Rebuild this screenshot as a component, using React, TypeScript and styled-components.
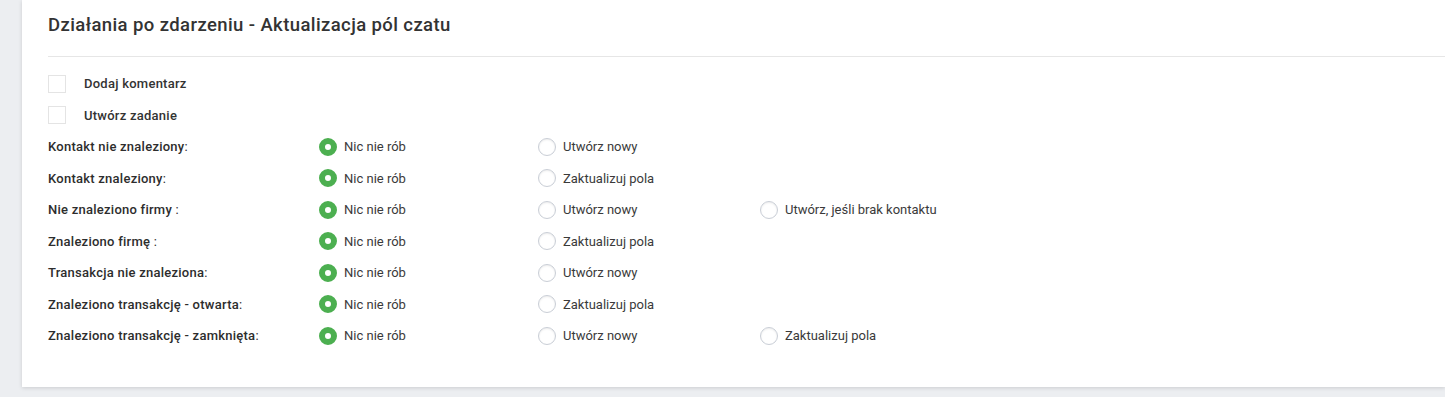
import styled, { createGlobalStyle } from "styled-components";

const GlobalStyle = createGlobalStyle`
  html, body {
    margin: 0;
    padding: 0;
    background: #eceef1;
    font-family: Roboto, "Liberation Sans", sans-serif;
    color: #333;
  }
`;

const Page = styled.div`
  padding-left: 22px;
  height: 397px;
  overflow: hidden;
`;

const Card = styled.section`
  background: #fff;
  box-shadow: 0 1px 4px rgba(0, 0, 0, 0.14);
  padding-bottom: 35px;
`;

const Header = styled.div`
  margin-left: 26px;
  height: 57px;
  box-sizing: border-box;
  padding-bottom: 7px;
  display: flex;
  align-items: center;
  border-bottom: 1px solid #e6e6e6;
`;

const Title = styled.h2`
  margin: 0;
  font-size: 18.5px;
  font-weight: 500;
  letter-spacing: 0.4px;
  color: #333;
`;

const Body = styled.div`
  padding: 11px 0 0 26px;
`;

const Row = styled.div`
  display: grid;
  grid-template-columns: 271px 219px 222px 1fr;
  align-items: center;
  height: 31.5px;
`;

const CheckRow = styled.label`
  display: flex;
  align-items: center;
  gap: 18px;
  height: 31.5px;
  font-size: 13px;
  font-weight: 500;
  letter-spacing: 0.25px;
  color: #333;
`;

const Box = styled.span`
  width: 18px;
  height: 18px;
  box-sizing: border-box;
  border: 1px solid #e4e4e4;
  background: #fff;
`;

const Label = styled.div`
  font-size: 13px;
  font-weight: 500;
  letter-spacing: 0.25px;
  color: #2d2d2d;
`;

const Colon = styled.span`
  font-weight: 400;
`;

const Option = styled.label`
  display: flex;
  align-items: center;
  gap: 7px;
  font-size: 13px;
  color: #3a3a3a;
`;

const Radio = styled.span<{ $checked?: boolean }>`
  width: 18px;
  height: 18px;
  box-sizing: border-box;
  border-radius: 50%;
  flex-shrink: 0;
  background: #fff;
  border: ${(p) => (p.$checked ? "6px solid #4caf50" : "1px solid #c9ced6")};
  box-shadow: ${(p) => (p.$checked ? "none" : "inset 0 1px 2px rgba(0,0,0,0.08)")};
`;

const rows: { label: string; sep: string; options: string[] }[] = [
  { label: "Kontakt nie znaleziony", sep: ":", options: ["Nic nie rób", "Utwórz nowy"] },
  { label: "Kontakt znaleziony", sep: ":", options: ["Nic nie rób", "Zaktualizuj pola"] },
  { label: "Nie znaleziono firmy", sep: " :", options: ["Nic nie rób", "Utwórz nowy", "Utwórz, jeśli brak kontaktu"] },
  { label: "Znaleziono firmę", sep: " :", options: ["Nic nie rób", "Zaktualizuj pola"] },
  { label: "Transakcja nie znaleziona", sep: ":", options: ["Nic nie rób", "Utwórz nowy"] },
  { label: "Znaleziono transakcję - otwarta", sep: ":", options: ["Nic nie rób", "Zaktualizuj pola"] },
  { label: "Znaleziono transakcję - zamknięta", sep: ":", options: ["Nic nie rób", "Utwórz nowy", "Zaktualizuj pola"] },
];

export default function App() {
  return (
    <Page>
      <GlobalStyle />
      <Card>
        <Header>
          <Title>Działania po zdarzeniu - Aktualizacja pól czatu</Title>
        </Header>
        <Body>
          <CheckRow>
            <Box />
            Dodaj komentarz
          </CheckRow>
          <CheckRow>
            <Box />
            Utwórz zadanie
          </CheckRow>
          {rows.map((r) => (
            <Row key={r.label}>
              <Label>
                {r.label}
                <Colon>{r.sep}</Colon>
              </Label>
              {r.options.map((o, i) => (
                <Option key={o}>
                  <Radio $checked={i === 0} />
                  {o}
                </Option>
              ))}
            </Row>
          ))}
        </Body>
      </Card>
    </Page>
  );
}
